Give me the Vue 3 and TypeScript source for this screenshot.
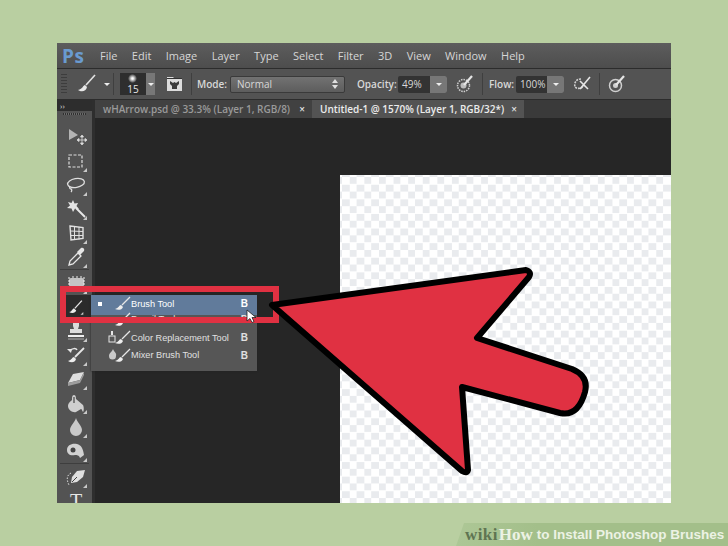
<script setup lang="ts">
const menus: string[] = ['File', 'Edit', 'Image', 'Layer', 'Type', 'Select', 'Filter', '3D', 'View', 'Window', 'Help']

interface Tool { id: string; corner: boolean; sepBefore?: boolean }
const tools: Tool[] = [
  { id: 'move', corner: false },
  { id: 'marquee', corner: true },
  { id: 'lasso', corner: true },
  { id: 'wand', corner: true },
  { id: 'crop', corner: true },
  { id: 'dropper', corner: true },
  { id: 'heal', corner: true, sepBefore: true },
  { id: 'brush', corner: true },
  { id: 'stamp', corner: true },
  { id: 'history', corner: true },
  { id: 'eraser', corner: true },
  { id: 'fill', corner: true },
  { id: 'blur', corner: true },
  { id: 'dodge', corner: true },
  { id: 'pen', corner: true, sepBefore: true },
  { id: 'type', corner: false }
]

interface Row { label: string; icon: string; active?: boolean; cls?: string }
const rows: Row[] = [
  { label: 'Brush Tool', icon: 'plain', active: true, cls: 'first' },
  { label: 'Pencil Tool', icon: 'plain', cls: 'second' },
  { label: 'Color Replacement Tool', icon: 'color' },
  { label: 'Mixer Brush Tool', icon: 'mixer' }
]
</script>

<template>
  <div class="page">
    <div class="window">
      <header class="menubar">
        <span class="logo">Ps</span>
        <nav class="menus">
          <span v-for="m in menus" :key="m" class="menu">{{ m }}</span>
        </nav>
      </header>

      <section class="options">
        <span class="grip"></span>
        <svg class="opt-brush" width="20" height="20" viewBox="0 0 20 20">
          <path d="M18 1 9 11" stroke="#e2e2e2" stroke-width="1.6" fill="none" />
          <path d="M8 11c-2 0-2 4-7 5 3 2 8 2 9-3z" fill="#e8e8e8" />
        </svg>
        <span class="caret small-caret"></span>
        <span class="sep s1"></span>
        <div class="preset">
          <span class="glow"></span>
          <span class="size">15</span>
        </div>
        <span class="preset-btn"><span class="caret"></span></span>
        <svg class="opt-folder" width="17" height="16" viewBox="0 0 17 16">
          <path d="M1 1h6l1 1h8v13H1z" fill="#dcdcdc" />
          <path d="M1 2.500h15" stroke="#333" stroke-width="1" />
          <path d="M4 5l3 2 1.500-1L10 7l3-2v3l-2 2v3H6v-3L4 8z" fill="#3a3a3a" />
        </svg>
        <span class="sep s2"></span>
        <span class="label mode-l">Mode:</span>
        <div class="select">
          <span>Normal</span>
          <svg width="6" height="10" viewBox="0 0 6 10"><path d="M3 0l3 4H0zM3 10l3-4H0z" fill="#e0e0e0" /></svg>
        </div>
        <span class="label op-l">Opacity:</span>
        <div class="num op-n"><span class="val">49%</span><span class="num-btn"><span class="caret"></span></span></div>
        <svg class="air a1" width="18" height="18" viewBox="0 0 18 18">
          <circle cx="7.500" cy="10.500" r="6" fill="none" stroke="#cfcfcf" stroke-width="1.500" stroke-dasharray="1.500 1" />
          <circle cx="7.500" cy="10.500" r="3" fill="#bdbdbd" />
          <path d="M8 10 16 1" stroke="#e6e6e6" stroke-width="2.200" />
        </svg>
        <span class="sep s3"></span>
        <span class="label fl-l">Flow:</span>
        <div class="num fl-n"><span class="val">100%</span><span class="num-btn"><span class="caret"></span></span></div>
        <svg class="air a2" width="19" height="18" viewBox="0 0 19 18">
          <path d="M8 4C3 4 1 8 2 12c2 2 6 2 9-1" fill="none" stroke="#cfcfcf" stroke-width="1.600" stroke-dasharray="2 1" />
          <path d="M7 14 17 2M7 6l8 8" stroke="#e6e6e6" stroke-width="1.600" />
        </svg>
        <span class="sep s4"></span>
        <svg class="air a3" width="18" height="18" viewBox="0 0 18 18">
          <circle cx="7.500" cy="10.500" r="6" fill="none" stroke="#cfcfcf" stroke-width="1.500" />
          <circle cx="7.500" cy="10.500" r="2.500" fill="#cfcfcf" />
          <path d="M8 10 16 1" stroke="#e6e6e6" stroke-width="2.200" />
        </svg>
      </section>

      <div class="body">
        <aside class="toolbox">
          <div class="tool-head"><span class="chev">››</span></div>
          <div class="tool-grip"></div>
          <div class="tool-list">
            <template v-for="t in tools" :key="t.id">
              <div v-if="t.sepBefore" class="tool-sep"></div>
              <div class="tool" :class="{ selected: t.id === 'brush' }">
                <svg width="24" height="24" viewBox="0 0 24 24" class="tool-icon">
                  <g v-if="t.id === 'move'">
                    <path d="M5 4v11l9-5z" fill="#b4b4b4" />
                    <path d="M18 11v8M14 15h8M18 10l-1.500 2h3zM18 20l-1.500-2h3zM13 15l2-1.500v3zM23 15l-2-1.500v3z" stroke="#ddd" stroke-width=".8" fill="#ddd" />
                  </g>
                  <rect v-else-if="t.id === 'marquee'" x="5" y="6" width="13" height="12" fill="none" stroke="#dedede" stroke-width="1.200" stroke-dasharray="3 1.500" />
                  <g v-else-if="t.id === 'lasso'" fill="none" stroke="#dedede" stroke-width="1.300">
                    <ellipse cx="12" cy="10" rx="8.500" ry="4.500" transform="rotate(-10 12 10)" />
                    <path d="M6 13c-1 2 0 3 1 3s1 2 0 3" />
                  </g>
                  <g v-else-if="t.id === 'wand'">
                    <path d="M9 3l1.500 3.500L14 6l-1.500 3L15 12l-4-.5L9 15l-1.500-3.500L3 11l3-2.500L4 5l3.500 1z" fill="#e4e4e4" />
                    <path d="M12 11l9 9" stroke="#e8e8e8" stroke-width="2" />
                  </g>
                  <g v-else-if="t.id === 'crop'" fill="none" stroke="#e2e2e2" stroke-width="1">
                    <path d="M6 5l13 1.500v11L7 19z" stroke-width="1.400" />
                    <path d="M10.500 5.500v13M15 6v12.500M6.300 10 19 10.500M6.700 14.500 19 14.500" />
                  </g>
                  <g v-else-if="t.id === 'dropper'">
                    <path d="M5 20l1-4 8-8 3 3-8 8z" fill="none" stroke="#e6e6e6" stroke-width="1.300" />
                    <path d="M13 7l2-2 2-2c2-1 4 1 3 3l-2 2-2 2z" fill="#e6e6e6" />
                  </g>
                  <g v-else-if="t.id === 'heal'">
                    <rect x="5" y="7" width="15" height="9" rx="2" fill="#c4c4c4" />
                    <path d="M4 7h2M4 10h2M4 13h2M4 16h2M19 7h2M19 10h2M19 13h2M19 16h2M9 5v2M13 5v2M17 5v2M9 16v2M13 16v2M17 16v2" stroke="#eee" stroke-width="1" />
                  </g>
                  <g v-else-if="t.id === 'brush'">
                    <path d="M21 3 11 14" stroke="#e6e6e6" stroke-width="1.800" />
                    <path d="M10 14c-3 0-2 4-7 5 3 2 9 2 10-2z" fill="#ededed" />
                  </g>
                  <g v-else-if="t.id === 'stamp'">
                    <path d="M9 4h6v3l-1 3h4v4H6v-4h4L9 7z" fill="#dcdcdc" />
                    <rect x="4" y="16" width="16" height="2" fill="#ededed" />
                    <rect x="4" y="19.500" width="16" height="1" fill="#aaa" />
                  </g>
                  <g v-else-if="t.id === 'history'">
                    <path d="M20 5 11 14" stroke="#e6e6e6" stroke-width="1.800" />
                    <path d="M10 14c-2 0-2 3-6 4 3 2 7 2 8-2z" fill="#ededed" />
                    <path d="M6 8c2-3 6-3 7-1" fill="none" stroke="#e6e6e6" stroke-width="1.500" />
                    <path d="M3 6l4 4 1-4z" fill="#e6e6e6" />
                  </g>
                  <g v-else-if="t.id === 'eraser'">
                    <path d="M9 7l11-2-4 8-12 3z" fill="#dedede" />
                    <path d="M4 16v3l12-3 0-3zM16 16l4-8V5l-4 8z" fill="#9d9d9d" />
                  </g>
                  <g v-else-if="t.id === 'fill'">
                    <path d="M10 4c2 0 2 3 2 4l7 6c1 2 1 6 0 7-1-1-1-3-2-3l-5 3c-3 1-8-2-8-6 0-3 3-5 4-6 0-2 0-5 2-5z" fill="#cfcfcf" />
                    <path d="M10 6v6" stroke="#444" stroke-width="1.200" />
                  </g>
                  <path v-else-if="t.id === 'blur'" d="M12 3c1 4 6 8 6 12a6 6 0 0 1-12 0c0-4 5-8 6-12z" fill="#c9c9c9" />
                  <g v-else-if="t.id === 'dodge'">
                    <path d="M3 11c0-5 5-7 10-6 4 1 6 4 7 11l-4 3c-1-3-3-3-5-3-5 1-8-1-8-5z" fill="#d2d2d2" />
                    <circle cx="9" cy="11" r="2.500" fill="#444" />
                  </g>
                  <g v-else-if="t.id === 'pen'">
                    <path d="M21 5l-8 1-5 6-1 6 6-1 6-5z" fill="#e0e0e0" />
                    <path d="M8 17l5-5" stroke="#444" stroke-width="1" />
                    <path d="M7 8C3 10 2 14 5 20" fill="none" stroke="#ddd" stroke-width="1" stroke-dasharray="1.500 1.500" />
                  </g>
                  <text v-else x="12" y="19" text-anchor="middle" class="t-glyph">T</text>
                  <path v-if="t.corner" d="M23 19v4h-4z" fill="#c9c9c9" />
                </svg>
              </div>
            </template>
          </div>
        </aside>

        <main class="doc">
          <div class="tabs">
            <div class="tab">
              <span>wHArrow.psd @ 33.3% (Layer 1, RGB/8)</span><span class="x">×</span>
            </div>
            <div class="tab on">
              <span>Untitled-1 @ 1570% (Layer 1, RGB/32*)</span><span class="x">×</span>
            </div>
          </div>
          <div class="stage">
            <div class="canvas"></div>
          </div>
        </main>
      </div>
    </div>

    <div class="flyout">
      <div v-for="r in rows" :key="r.label" class="row" :class="[{ active: r.active }, r.cls]">
        <span class="bullet"></span>
        <svg class="row-icon" width="24" height="15" viewBox="0 0 24 15">
          <path d="M23 1 15 9" stroke="#e6e6e6" stroke-width="1.300" />
          <path d="M14 9c-2 0-2 3-6 4 3 1.500 7 1 8-2z" fill="#ededed" />
          <rect v-if="r.icon === 'color'" x="2" y="6" width="6" height="6" fill="none" stroke="#e6e6e6" />
          <path v-if="r.icon === 'color'" d="M4 1h2v4H4z" fill="#e6e6e6" />
          <path v-if="r.icon === 'mixer'" d="M6 1c1 3 4 4 3 7a3.500 3.500 0 0 1-7 0c0-3 3-4 4-7z" fill="#c9c9c9" />
        </svg>
        <span class="row-label">{{ r.label }}</span>
        <span class="row-key">B</span>
      </div>
    </div>

    <div class="highlight"></div>

    <svg class="cursor" width="12" height="15" viewBox="0 0 12 15">
      <path d="M1 1v11l3-2.500 2 4 2-1-2-4h4z" fill="#fff" stroke="#222" stroke-width=".8" />
    </svg>

    <svg class="arrow" width="728" height="546" viewBox="0 0 728 546">
      <path
        d="M272 305 L526 270 Q532 272 529 277 L477 338 L572 369 Q589 376 585 392 Q578 417 560 413 L462 387 L468 470 Q467 474 462 471 Z"
        fill="#e03142"
        stroke="#000"
        stroke-width="6"
        stroke-linejoin="round"
      />
    </svg>

    <div class="banner">
      <span class="wiki">wiki</span><span class="how">How</span><span class="title">to Install Photoshop Brushes</span>
    </div>
  </div>
</template>

<style>
html, body { margin: 0; padding: 0; overflow: hidden; }
</style>

<style scoped>
.page {
  position: relative;
  width: 728px;
  height: 546px;
  box-sizing: border-box;
  padding: 43px 57px 43px;
  background: #b9cfa1;
  overflow: hidden;
  font-family: "Open Sans", "Liberation Sans", sans-serif;
}
.window {
  width: 614px;
  height: 460px;
  display: flex;
  flex-direction: column;
  background: #535353;
  overflow: hidden;
}
.menubar {
  height: 25px;
  flex: none;
  display: flex;
  align-items: center;
  background: linear-gradient(#5d5d5d, #4d4d4d);
  border-bottom: 1px solid #2c2c2c;
}
.logo {
  margin-left: 5px;
  width: 38px;
  font: bold 19px "Open Sans", sans-serif;
  color: #6a9bd0;
  letter-spacing: .5px;
}
.menus { display: flex; gap: 14.400px; }
.menu { font-size: 11px; color: #d6d6d6; }

.options {
  height: 30px;
  flex: none;
  display: flex;
  align-items: center;
  background: #535353;
  border-bottom: 1px solid #2c2c2c;
  font-size: 10px;
  color: #d8d8d8;
}
.grip {
  width: 6px;
  height: 20px;
  margin-left: 4px;
  background: repeating-linear-gradient(#3d3d3d 0 1px, transparent 1px 3px);
}
.opt-brush { margin-left: 10px; }
.caret {
  display: inline-block;
  width: 0;
  height: 0;
  border: 3px solid transparent;
  border-top: 3px solid #eee;
  border-bottom: 0;
}
.small-caret { margin-left: 7px; }
.sep { width: 1px; height: 22px; background: #3f3f3f; flex: none; }
.s1 { margin-left: 3px; }
.preset {
  margin-left: 6px;
  width: 26px;
  height: 22px;
  background: #2e2e2e;
  position: relative;
  display: flex;
  align-items: flex-end;
  justify-content: center;
  box-sizing: border-box;
}
.glow {
  position: absolute;
  top: 1px;
  left: 8px;
  width: 9px;
  height: 9px;
  border-radius: 50%;
  background: radial-gradient(#fff 10%, #8d8d8d 45%, transparent 72%);
}
.size { font-size: 10px; line-height: 11px; color: #e8e8e8; }
.preset-btn {
  width: 9px;
  height: 22px;
  background: #777;
  display: flex;
  align-items: center;
  justify-content: center;
}
.opt-folder { margin-left: 11px; }
.s2 { margin-left: 8px; }
.label { font-weight: 600; flex: none; }
.mode-l { margin-left: 5px; width: 33px; }
.select {
  width: 115px;
  height: 17px;
  flex: none;
  box-sizing: border-box;
  padding: 0 6px;
  display: flex;
  align-items: center;
  justify-content: space-between;
  background: linear-gradient(#727272, #5d5d5d);
  border: 1px solid #3a3a3a;
  border-radius: 2px;
  font-size: 10px;
}
.op-l { margin-left: 12px; width: 41px; }
.num {
  height: 17px;
  flex: none;
  display: flex;
  background: #333;
  border-radius: 2px;
  overflow: hidden;
}
.op-n { width: 49px; }
.fl-n { width: 48px; }
.val { flex: 1; padding-left: 4px; line-height: 17px; font-size: 10px; }
.num-btn {
  width: 17px;
  flex: none;
  background: #777;
  display: flex;
  align-items: center;
  justify-content: center;
}
.a1 { margin-left: 9px; }
.s3 { margin-left: 8px; }
.fl-l { margin-left: 6px; width: 27px; }
.a2 { margin-left: 9px; }
.s4 { margin-left: 7px; }
.a3 { margin-left: 8px; }

.body { flex: 1; display: flex; min-height: 0; }
.toolbox {
  width: 35px;
  flex: none;
  background: #535353;
  border-right: 3px solid #2e2e2e;
  overflow: hidden;
  box-sizing: content-box;
}
.tool-head {
  height: 11px;
  background: #2d2d2d;
  color: #ddd;
  font-size: 8px;
  line-height: 11px;
  padding-left: 3px;
}
.tool-grip {
  height: 2px;
  margin: 2px 6px 10px 6px;
  background: repeating-linear-gradient(90deg, #2f2f2f 0 1px, #6a6a6a 1px 2px);
}
.tool-sep { height: 1px; margin: 0 3px 1px; background: #3e3e3e; }
.tool {
  height: 24px;
  display: flex;
  align-items: center;
  justify-content: center;
}
.tool-icon { display: block; margin-left: 2px; }
.selected { background: #2b2b2b; margin-left: 8px; padding-right: 8px; }
.t-glyph { font: 400 20px "Liberation Serif", serif; fill: #e6e6e6; }

.doc { flex: 1; min-width: 0; display: flex; flex-direction: column; background: #262626; }
.tabs { height: 18px; flex: none; display: flex; background: #3a3a3a; font-size: 10px; font-weight: 600; }
.tab {
  display: flex;
  align-items: center;
  justify-content: space-between;
  box-sizing: border-box;
  width: 217px;
  padding: 0 7px 0 8px;
  color: #9a9a9a;
  background: #414141;
  white-space: nowrap;
}
.tab.on { width: 212px; background: #535353; color: #ececec; }
.x { font-size: 10px; color: #e0e0e0; }
.stage { flex: 1; padding: 57px 0 0 245px; min-height: 0; }
.canvas {
  height: 100%;
  background-color: #fff;
  background-image: conic-gradient(#e9ebee 25%, #fff 0 50%, #e9ebee 0 75%, #fff 0);
  background-size: 14.600px 14.600px;
  background-position: 2px 2px;
}

.flyout {
  position: absolute;
  left: 91px;
  top: 295px;
  width: 166px;
  height: 76px;
  background: #565656;
  box-shadow: 0 0 2px #222;
  font: 9.200px "Liberation Sans", sans-serif;
  color: #e0e0e0;
}
.row {
  height: 17.500px;
  display: flex;
  align-items: center;
  box-sizing: border-box;
  padding: 0 9px 0 7px;
}
.row.first { height: 20px; padding-bottom: 3px; }
.row.second { margin-top: -6px; height: 20px; }
.active { background: #617b9b; color: #fff; }
.bullet { width: 4px; height: 4px; flex: none; margin-right: 5px; }
.active .bullet { background: #fff; }
.row-icon { flex: none; margin-right: 0; }
.row-label { flex: 1; white-space: nowrap; }
.row-key { flex: none; font-weight: 700; font-size: 10px; }

.highlight {
  position: absolute;
  left: 60px;
  top: 286px;
  width: 219px;
  height: 37px;
  box-sizing: border-box;
  border: 6.500px solid #e03142;
}
.cursor { position: absolute; left: 246px; top: 309px; }
.arrow { position: absolute; left: 0; top: 0; }

.banner {
  position: absolute;
  right: 0;
  bottom: 0;
  width: 272px;
  height: 23px;
  box-sizing: border-box;
  padding-left: 9px;
  display: flex;
  align-items: center;
  white-space: pre;
  clip-path: polygon(8px 0, 100% 0, 100% 100%, 0 100%);
  background: linear-gradient(90deg, #adc796, #a3bf8a 30%);
  color: #ecf2e4;
  font: bold 13.500px "Liberation Sans", sans-serif;
}
.wiki { font: bold 17px "Liberation Serif", serif; color: #5f7552; letter-spacing: .4px; }
.how { font: bold 17px "Liberation Serif", serif; margin-left: 1px; }
.title { margin-left: 4px; }
</style>
